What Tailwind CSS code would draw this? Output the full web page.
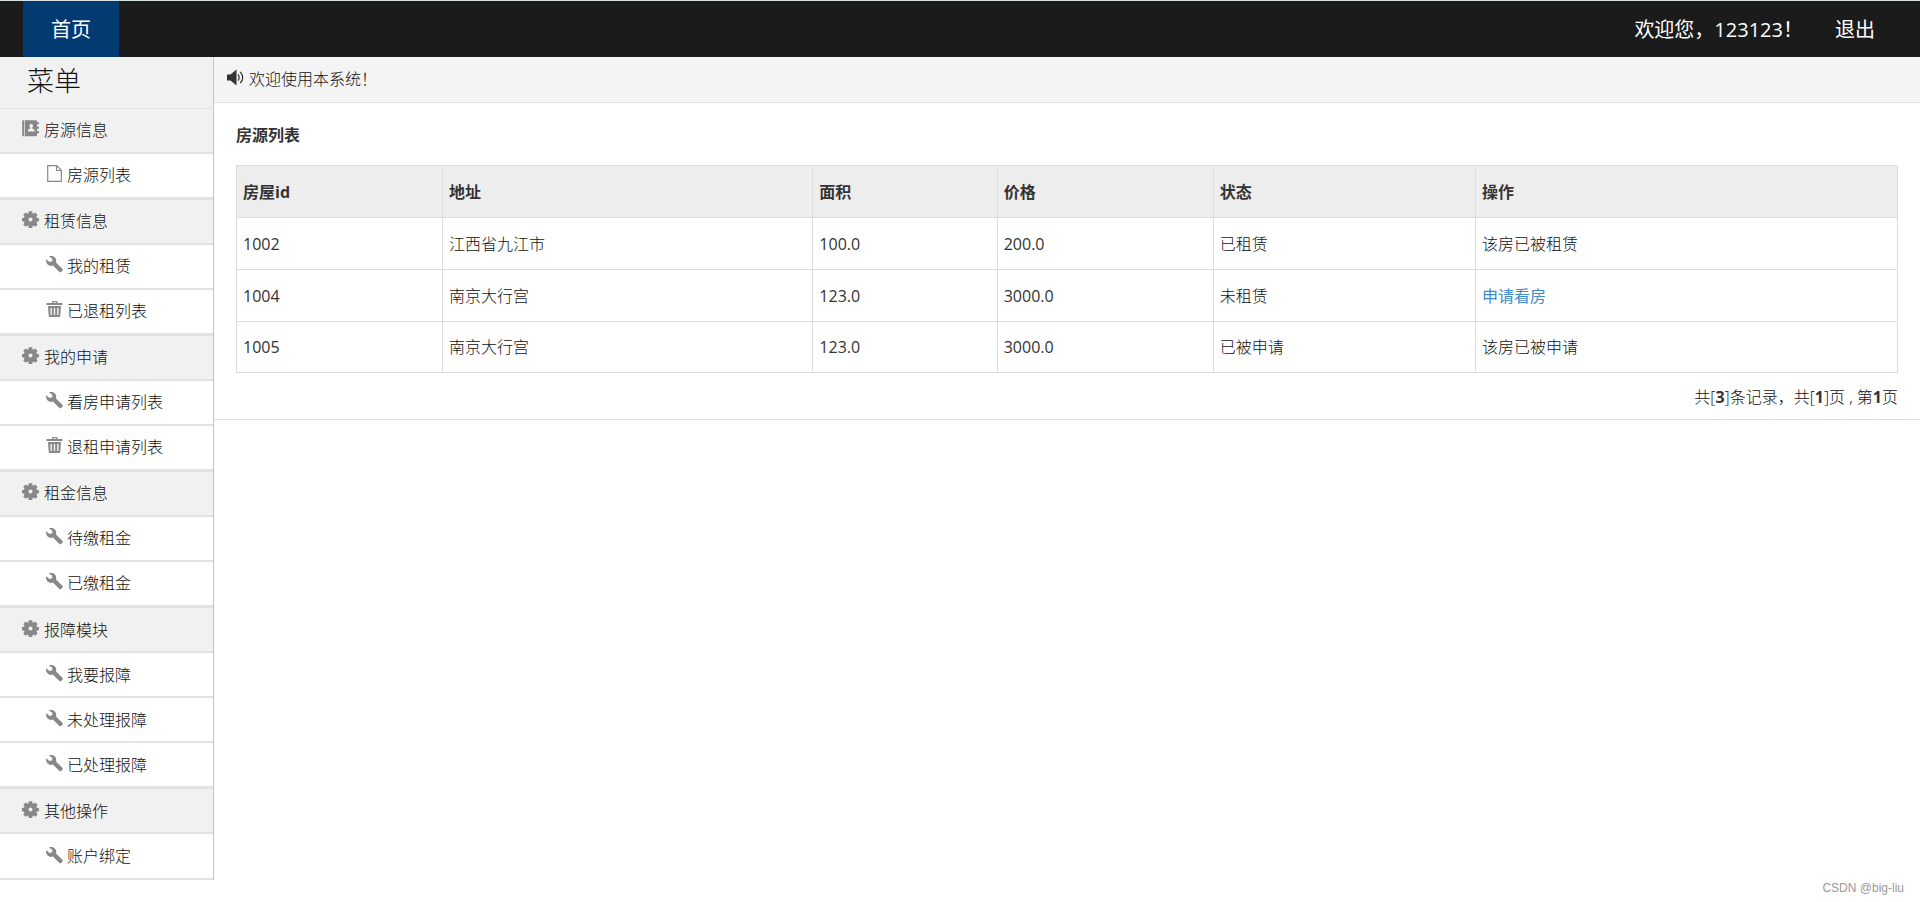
<!DOCTYPE html>
<html lang="zh-CN">
<head>
<meta charset="utf-8">
<meta name="viewport" content="width=device-width, initial-scale=1">
<title>房源列表</title>
<script src="https://cdn.jsdelivr.net/npm/@tailwindcss/browser@4"></script>
</head>
<body class="flex min-h-screen flex-col bg-white font-['Open_Sans','Noto_Sans_CJK_SC',sans-serif] text-base text-[#333]">
<svg class="hidden" aria-hidden="true">
  <symbol id="cog" viewBox="0 0 17 17">
    <path fill="currentColor" fill-rule="evenodd" d="M6.800.2h3.400l.4 2.200.8.4 1.900-1.200 2.300 2.300-1.200 1.900.3.900 2.200.4v3.200l-2.200.4-.3.900 1.200 1.900-2.300 2.300-1.900-1.200-.8.4-.4 2.200H6.800l-.4-2.200-.9-.4-1.900 1.200-2.300-2.300 1.200-1.900-.3-.9L0 10.300V7.100l2.200-.4.3-.9-1.200-1.900 2.300-2.300 1.900 1.200.9-.4zM8.500 6.600a2 2 0 1 0 0 4 2 2 0 1 0 0-4z"/>
  </symbol>
  <symbol id="wrench" viewBox="0 0 17 17">
    <path fill="currentColor" d="M2.800.6A5 5 0 0 1 10 6.500l6.400 6.200c.6.600.6 1.300.1 1.800l-1.300 1.400c-.6.600-1.300.5-1.800 0L6.900 9.500A5 5 0 0 1 .3 3.300L3.500 6 6.200 5.200 6.300 2.700z"/>
  </symbol>
  <symbol id="trash" viewBox="0 0 17 17">
    <path fill="currentColor" fill-rule="evenodd" d="M6 2V1c0-.6.400-1 1-1h3.500c.6 0 1 .4 1 1v1h4c.6 0 1 .5 1 1.200v.8H.500v-.8C.500 2.500.900 2 1.500 2zM7.200 1.200V2h3v-.8zM2 5h13l-.7 9.800c-.1.800-.6 1.200-1.300 1.200H4c-.7 0-1.200-.4-1.300-1.200zM4.500 7v7h1.300V7zM7.900 7v7h1.200V7zM11.200 7v7h1.300V7z"/>
  </symbol>
  <symbol id="file" viewBox="0 0 17 17">
    <path fill="none" stroke="currentColor" stroke-width="1.200" d="M1.700.7h9l4.600 4.600v11h-13.600z"/>
    <path fill="none" stroke="currentColor" stroke-width="1.200" d="M10.500.7v4.800h4.800"/>
  </symbol>
  <symbol id="book" viewBox="0 0 17 17">
    <path fill="currentColor" fill-rule="evenodd" d="M1.200.2h.8v16h-.8C.6 16.200.2 15.800.2 15.200v-14c0-.6.4-1 1-1zM2.700.2H14c.7 0 1 .4 1 1V2h1.500c.4 0 .4.300.4.500v1.700H15V6.500h1.500c.4 0 .4.300.4.500v1.700H15V11h1.500c.4 0 .4.300.4.500v1.700H15v2c0 .6-.4 1-1 1H2.700zM9.200 4c-1.400 0-1.900.9-1.800 2 .1.800.4 1.300.8 1.600v.8L6.400 9.500c-.4.300-.5.700-.5 1.100v1h6.700v-1c0-.5-.2-.8-.6-1.100L10.200 8.400v-.8c.4-.3.700-.8.8-1.600.1-1.100-.4-2-1.800-2z"/>
  </symbol>
  <symbol id="volume" viewBox="0 0 17 17">
    <path fill="currentColor" d="M0 5.500h3.500L9.500.5v16l-6-5H0z"/>
    <path fill="none" stroke="currentColor" stroke-width="1.200" d="M11 5.300q2.300 3.200 0 6.400M13.200 2.800q5 5.700 0 11.400"/>
  </symbol>
</svg>

<header class="flex h-[57px] items-stretch justify-between border-t border-[#d5e0e0] bg-[#1b1b1b] pr-[25px] pl-[23px] text-xl text-white">
  <a href="#" class="flex w-24 items-center justify-center bg-[#043a72] pt-0.5">首页</a>
  <nav class="flex items-center gap-8 pt-0.5 pr-5">
    <a href="#">欢迎您，123123！</a>
    <a href="#">退出</a>
  </nav>
</header>

<div class="flex flex-1 items-start">
  <aside class="w-[214px] shrink-0 border-r border-[#c4c4c4] font-light text-[#111]">
    <h1 class="flex h-[51px] items-center bg-[#f1f1f1] pb-0.5 pl-[27px] text-[27px]">菜单</h1>
    <nav>
      <h2 class="flex h-[46px] items-center gap-[5px] border-t border-b-2 border-[#e2e2e2] bg-[#f1f1f1] pb-0.5 pl-[22px]"><svg class="mb-0.5 size-[17px] text-[#888]"><use href="#book"/></svg>房源信息</h2>
      <a href="#" class="flex h-[45px] items-center gap-1 border-b-2 border-[#e2e2e2] pb-0.5 pl-[46px]"><svg class="mb-0.5 size-[17px] text-[#888]"><use href="#file"/></svg>房源列表</a>
      <h2 class="flex h-[46px] items-center gap-[5px] border-t border-b-2 border-[#e2e2e2] bg-[#f1f1f1] pb-0.5 pl-[22px]"><svg class="mb-0.5 size-[17px] text-[#888]"><use href="#cog"/></svg>租赁信息</h2>
      <a href="#" class="flex h-[45px] items-center gap-1 border-b-2 border-[#e2e2e2] pb-0.5 pl-[46px]"><svg class="mb-0.5 size-[17px] text-[#888]"><use href="#wrench"/></svg>我的租赁</a>
      <a href="#" class="flex h-[45px] items-center gap-1 border-b-2 border-[#e2e2e2] pb-0.5 pl-[46px]"><svg class="mb-0.5 size-[17px] text-[#888]"><use href="#trash"/></svg>已退租列表</a>
      <h2 class="flex h-[46px] items-center gap-[5px] border-t border-b-2 border-[#e2e2e2] bg-[#f1f1f1] pb-0.5 pl-[22px]"><svg class="mb-0.5 size-[17px] text-[#888]"><use href="#cog"/></svg>我的申请</h2>
      <a href="#" class="flex h-[45px] items-center gap-1 border-b-2 border-[#e2e2e2] pb-0.5 pl-[46px]"><svg class="mb-0.5 size-[17px] text-[#888]"><use href="#wrench"/></svg>看房申请列表</a>
      <a href="#" class="flex h-[45px] items-center gap-1 border-b-2 border-[#e2e2e2] pb-0.5 pl-[46px]"><svg class="mb-0.5 size-[17px] text-[#888]"><use href="#trash"/></svg>退租申请列表</a>
      <h2 class="flex h-[46px] items-center gap-[5px] border-t border-b-2 border-[#e2e2e2] bg-[#f1f1f1] pb-0.5 pl-[22px]"><svg class="mb-0.5 size-[17px] text-[#888]"><use href="#cog"/></svg>租金信息</h2>
      <a href="#" class="flex h-[45px] items-center gap-1 border-b-2 border-[#e2e2e2] pb-0.5 pl-[46px]"><svg class="mb-0.5 size-[17px] text-[#888]"><use href="#wrench"/></svg>待缴租金</a>
      <a href="#" class="flex h-[45px] items-center gap-1 border-b-2 border-[#e2e2e2] pb-0.5 pl-[46px]"><svg class="mb-0.5 size-[17px] text-[#888]"><use href="#wrench"/></svg>已缴租金</a>
      <h2 class="flex h-[46px] items-center gap-[5px] border-t border-b-2 border-[#e2e2e2] bg-[#f1f1f1] pl-[22px]"><svg class="mb-0.5 size-[17px] text-[#888]"><use href="#cog"/></svg>报障模块</h2>
      <a href="#" class="flex h-[45px] items-center gap-1 border-b-2 border-[#e2e2e2] pl-[46px]"><svg class="mb-0.5 size-[17px] text-[#888]"><use href="#wrench"/></svg>我要报障</a>
      <a href="#" class="flex h-[45px] items-center gap-1 border-b-2 border-[#e2e2e2] pl-[46px]"><svg class="mb-0.5 size-[17px] text-[#888]"><use href="#wrench"/></svg>未处理报障</a>
      <a href="#" class="flex h-[45px] items-center gap-1 border-b-2 border-[#e2e2e2] pl-[46px]"><svg class="mb-0.5 size-[17px] text-[#888]"><use href="#wrench"/></svg>已处理报障</a>
      <h2 class="flex h-[46px] items-center gap-[5px] border-t border-b-2 border-[#e2e2e2] bg-[#f1f1f1] pl-[22px]"><svg class="mb-0.5 size-[17px] text-[#888]"><use href="#cog"/></svg>其他操作</h2>
      <a href="#" class="flex h-[46px] items-center gap-1 border-b-2 border-[#e2e2e2] pl-[46px]"><svg class="mb-0.5 size-[17px] text-[#888]"><use href="#wrench"/></svg>账户绑定</a>
    </nav>
  </aside>

  <main class="min-w-0 flex-1">
    <p class="flex h-[46px] items-center gap-[5px] border-b border-[#e2e2e2] bg-[#f4f4f4] pb-0.5 pl-[13px] font-light text-[#111]"><svg class="mb-0.5 size-[17px] text-[#333]"><use href="#volume"/></svg>欢迎使用本系统！</p>
    <section class="border-b border-[#e0e0e0] px-[22px] pt-5 pb-[10px]">
      <h2 class="mb-[18px] leading-6 font-bold">房源列表</h2>
      <table class="w-full table-fixed border-collapse text-left">
        <thead>
          <tr class="h-[52px] bg-[#ededed]">
            <th class="w-[12.4%] border border-[#dcdcdc] px-1.5">房屋id</th>
            <th class="w-[22.3%] border border-[#dcdcdc] px-1.5">地址</th>
            <th class="w-[11.1%] border border-[#dcdcdc] px-1.5">面积</th>
            <th class="w-[13%] border border-[#dcdcdc] px-1.5">价格</th>
            <th class="w-[15.8%] border border-[#dcdcdc] px-1.5">状态</th>
            <th class="border border-[#dcdcdc] px-1.5">操作</th>
          </tr>
        </thead>
        <tbody>
          <tr class="h-[52px]">
            <td class="border border-[#dcdcdc] px-1.5">1002</td>
            <td class="border border-[#dcdcdc] px-1.5 font-light text-[#111]">江西省九江市</td>
            <td class="border border-[#dcdcdc] px-1.5">100.0</td>
            <td class="border border-[#dcdcdc] px-1.5">200.0</td>
            <td class="border border-[#dcdcdc] px-1.5 font-light text-[#111]">已租赁</td>
            <td class="border border-[#dcdcdc] px-1.5 font-light text-[#111]">该房已被租赁</td>
          </tr>
          <tr class="h-[52px]">
            <td class="border border-[#dcdcdc] px-1.5">1004</td>
            <td class="border border-[#dcdcdc] px-1.5 font-light text-[#111]">南京大行宫</td>
            <td class="border border-[#dcdcdc] px-1.5">123.0</td>
            <td class="border border-[#dcdcdc] px-1.5">3000.0</td>
            <td class="border border-[#dcdcdc] px-1.5 font-light text-[#111]">未租赁</td>
            <td class="border border-[#dcdcdc] px-1.5"><a href="#" class="text-[#428bca]">申请看房</a></td>
          </tr>
          <tr class="h-[51px]">
            <td class="border border-[#dcdcdc] px-1.5">1005</td>
            <td class="border border-[#dcdcdc] px-1.5 font-light text-[#111]">南京大行宫</td>
            <td class="border border-[#dcdcdc] px-1.5">123.0</td>
            <td class="border border-[#dcdcdc] px-1.5">3000.0</td>
            <td class="border border-[#dcdcdc] px-1.5 font-light text-[#111]">已被申请</td>
            <td class="border border-[#dcdcdc] px-1.5 font-light text-[#111]">该房已被申请</td>
          </tr>
        </tbody>
      </table>
      <p class="mt-3 text-right leading-6 font-light text-[#111]">共[<b class="font-bold text-[#333]">3</b>]条记录，共[<b class="font-bold text-[#333]">1</b>]页 , 第<b class="font-bold text-[#333]">1</b>页</p>
    </section>
  </main>
</div>

<footer class="pr-4 text-right font-['Liberation_Sans',sans-serif] text-xs leading-4 text-[#999] pb-2">CSDN @big-liu</footer>
</body>
</html>
